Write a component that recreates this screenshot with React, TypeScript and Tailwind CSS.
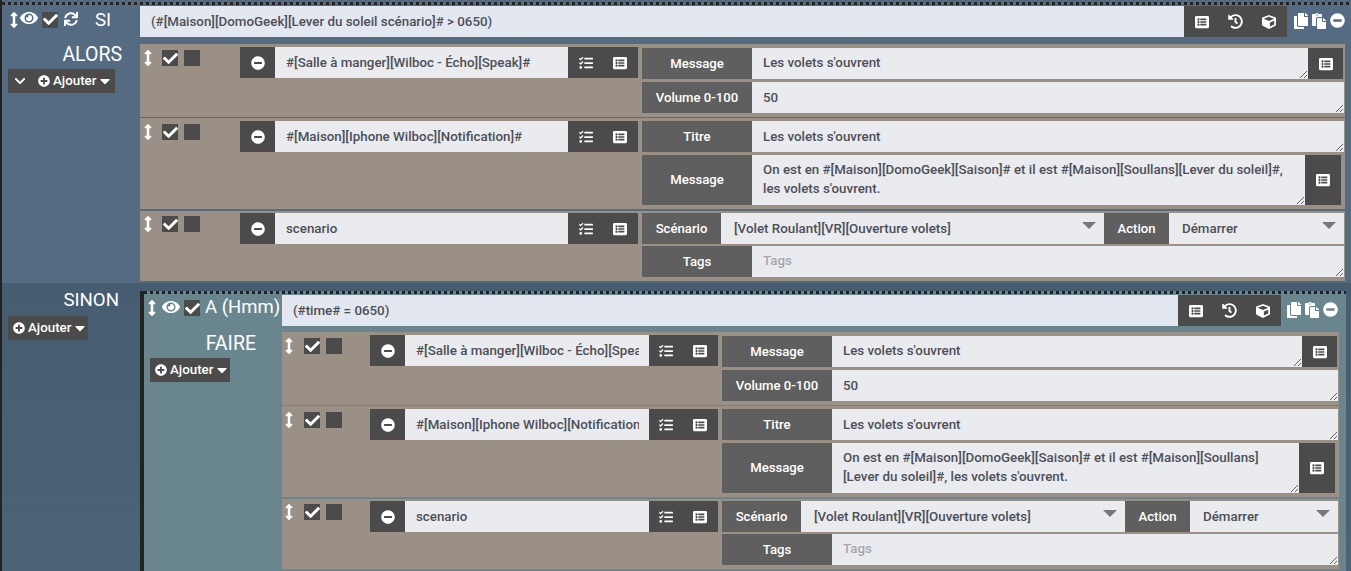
import type { ReactNode } from "react";
import {
  FaArrowsAltV,
  FaCaretDown,
  FaCheck,
  FaChevronDown,
  FaCopy,
  FaCube,
  FaEye,
  FaHistory,
  FaListAlt,
  FaMinusCircle,
  FaPaste,
  FaPlusCircle,
  FaSync,
  FaTasks,
} from "react-icons/fa";

function CheckBox({ checked = true }: { checked?: boolean }) {
  return (
    <span className="flex h-4 w-4 items-center justify-center bg-[#4b4b4b] text-white">
      {checked ? <FaCheck className="h-[15px] w-[15px]" /> : null}
    </span>
  );
}

function Dots() {
  return <div className="h-[3px] bg-[repeating-linear-gradient(90deg,#222_0_3px,transparent_3px_6px)]" />;
}

function AddButton({ chevron = false }: { chevron?: boolean }) {
  return (
    <div className={`flex h-6 w-fit items-center bg-[#4b4b4b] pl-[5px] text-[13.33px] font-medium text-white ${chevron ? "pr-[5px]" : "pr-[3px]"}`}>
      {chevron ? <FaChevronDown className="mr-[12px] ml-[1px] h-[12px] w-[12px]" /> : null}
      <FaPlusCircle className="mr-[3px] h-[12px] w-[12px]" />
      Ajouter
      <FaCaretDown className="ml-[4px] h-[16px] w-[10px]" />
    </div>
  );
}

function Label({ children, className }: { children: ReactNode; className: string }) {
  return (
    <div className={`flex shrink-0 items-center justify-center bg-[#5f5f5f] text-[13.15px] font-medium text-white ${className}`}>
      {children}
    </div>
  );
}

type AreaProps = {
  value?: string;
  placeholder?: string;
  height: string;
  tight?: boolean;
  side?: ReactNode;
};

function Area({ value, placeholder, height, tight, side }: AreaProps) {
  return (
    <div className={`flex min-w-0 flex-1 ${height}`}>
      <textarea
        readOnly
        defaultValue={value}
        placeholder={placeholder}
        className={`h-full min-w-0 flex-1 resize-y bg-[#e9ebef] px-[11px] text-[13.33px] leading-[19px] font-medium text-[#4d4f57] outline-none placeholder:text-[#a5a7ac] ${tight ? "py-[5px]" : "py-[6px]"}`}
      />
      {side}
    </div>
  );
}

function ListButton({ className }: { className: string }) {
  return (
    <div className={`flex shrink-0 items-center justify-center bg-[#4b4b4b] text-white ${className}`}>
      <FaListAlt className="h-[14px] w-[14px]" />
    </div>
  );
}

function Select({ value, className }: { value: string; className: string }) {
  return (
    <div className={`flex items-center bg-[#e9ebef] pl-[13px] text-[13.33px] font-medium text-[#4d4f57] ${className}`}>
      <span className="flex-1 truncate">{value}</span>
      <span className="mr-2 mb-[7px] h-0 w-0 border-x-[7px] border-t-[7px] border-x-transparent border-t-[#777]" />
    </div>
  );
}

type RowProps = {
  name: string;
  children: ReactNode;
  nested: boolean;
  first?: boolean;
  className: string;
};

function ActionRow({ name, children, nested, first, className }: RowProps) {
  return (
    <div className={`flex bg-[#9a9086] ${className}`}>
      <div className={`flex shrink-0 items-start ${first ? "pt-[2px]" : "pt-[3px]"} ${nested ? "w-[88px] pl-[3px]" : "w-[100px] pl-1"}`}>
        <FaArrowsAltV className="h-[16px] w-[8px] text-white" />
        <span className={`mr-[6px] ${nested ? "ml-[11px]" : "ml-[10px]"}`}>
          <CheckBox />
        </span>
        <CheckBox checked={false} />
      </div>
      <div className={`flex h-[31px] shrink-0 ${first ? "-mt-px" : ""} ${nested ? "w-[348px]" : "w-[398px]"}`}>
        <div className="flex w-[35px] shrink-0 items-center justify-center bg-[#4b4b4b] text-white">
          <FaMinusCircle className="h-[14px] w-[14px]" />
        </div>
        <input
          readOnly
          value={name}
          className="min-w-0 flex-1 bg-[#e9ebef] pr-[10px] pl-[11px] text-[13.33px] font-medium text-[#4d4f57] outline-none"
        />
        <div className={`flex shrink-0 items-center justify-between bg-[#4b4b4b] pr-[11px] text-white ${nested ? "w-[69px] pl-[10px]" : "w-[70px] pl-[11px]"}`}>
          <FaTasks className="h-[14px] w-[14px]" />
          <FaListAlt className="h-[14px] w-[14px]" />
        </div>
      </div>
      <div className="ml-1 flex min-w-0 flex-1 flex-col pr-px">{children}</div>
    </div>
  );
}

const MESSAGE = "On est en #[Maison][DomoGeek][Saison]# et il est #[Maison][Soullans][Lever du soleil]#, les volets s'ouvrent.";

function Rows({ nested }: { nested: boolean }) {
  return (
    <div className="flex flex-col">
      <ActionRow name="#[Salle à manger][Wilboc - Écho][Speak]#" nested={nested} first className="h-[73px] pt-1">
        <div className="flex">
          <Label className="h-[31px] w-[110px]">Message</Label>
          <Area value="Les volets s'ouvrent" height="h-[31px]" tight side={<ListButton className="mr-px w-[35px]" />} />
        </div>
        <div className="mt-[3px] flex">
          <Label className="h-[31px] w-[110px]">Volume 0-100</Label>
          <Area value="50" height="h-[31px]" />
        </div>
      </ActionRow>
      <ActionRow name="#[Maison][Iphone Wilboc][Notification]#" nested={nested} className="mt-px h-[91px] pt-[3px]">
        <div className="flex">
          <Label className="h-[31px] w-[110px]">Titre</Label>
          <Area value="Les volets s'ouvrent" height="h-[31px]" />
        </div>
        <div className="mt-[3px] flex">
          <Label className="h-[50px] w-[110px]">Message</Label>
          <Area value={MESSAGE} height="h-[50px]" tight side={<ListButton className="mr-[3px] w-9" />} />
        </div>
      </ActionRow>
      <ActionRow name="scenario" nested={nested} className="mt-[2px] h-[70px] pt-[2px]">
        <div className="flex h-[31px]">
          <Label className="h-[31px] w-[79px]">Scénario</Label>
          <Select value="[Volet Roulant][VR][Ouverture volets]" className="min-w-0 flex-1" />
          <Label className="h-[31px] w-[65px]">Action</Label>
          <Select value="Démarrer" className={nested ? "w-[148px]" : "w-[175px]"} />
        </div>
        <div className="mt-[2px] flex">
          <Label className="h-[31px] w-[110px]">Tags</Label>
          <Area placeholder="Tags" height="h-[31px]" tight />
        </div>
      </ActionRow>
    </div>
  );
}

function HeaderBar({ expression, className }: { expression: string; className: string }) {
  return (
    <>
      <div className="min-w-0 flex-1 bg-[#e3e7ef] pl-[11px] text-[13.33px] leading-[32px] font-medium text-[#4d4f57]">
        {expression}
      </div>
      <div className="flex w-[103px] shrink-0 items-center justify-around bg-[#4b4b4b] px-[1px] text-white">
        <FaListAlt className="h-[14px] w-[14px]" />
        <FaHistory className="h-[15px] w-[15px]" />
        <FaCube className="h-[14px] w-[14px]" />
      </div>
      <div className={`flex shrink-0 items-center gap-1 pb-[2px] text-white ${className}`}>
        <FaCopy className="h-[16px] w-[14px]" />
        <FaPaste className="h-[16px] w-[14px]" />
        <FaMinusCircle className="h-[15px] w-[15px]" />
      </div>
    </>
  );
}

export default function App() {
  return (
    <div className="h-[571px] w-[1351px] overflow-hidden border-l-2 border-[#222] font-['Roboto',sans-serif] text-white">
      {/* SI / ALORS */}
      <section className="h-[283px] bg-[#546b81] pt-[2px]">
        <Dots />
        <div className="mt-px flex h-[31px]">
          <div className="flex w-[138px] shrink-0 items-center pb-[4px] pl-[8px]">
            <FaArrowsAltV className="h-[16px] w-[8px]" />
            <FaEye className="mb-[3px] ml-[2px] h-[18px] w-[18px]" />
            <span className="ml-[4px]">
              <CheckBox />
            </span>
            <FaSync className="mb-[2px] ml-[6px] h-[14px] w-[14px]" />
            <span className="ml-[17px] text-[18.67px]">SI</span>
          </div>
          <HeaderBar expression="(#[Maison][DomoGeek][Lever du soleil scénario]# > 0650)" className="ml-[7px] w-[57px]" />
        </div>
        <div className="mt-[7px] flex">
          <div className="w-[138px] shrink-0 pl-[6px]">
            <div className="pr-[18px] text-right text-[19.5px] leading-[21px]">ALORS</div>
            <div className="mt-[4px]">
              <AddButton chevron />
            </div>
          </div>
          <div className="w-[1205px]">
            <Rows nested={false} />
          </div>
        </div>
      </section>

      {/* SINON */}
      <section className="flex h-[288px] bg-[linear-gradient(180deg,#465c71,#4c6276)]">
        <div className="w-[138px] shrink-0 pt-[7px] pl-[6px]">
          <div className="pr-[21px] text-right text-[18.67px] leading-[21px]">SINON</div>
          <div className="mt-[5px]">
            <AddButton />
          </div>
        </div>
        <div className="mt-[8px] w-[1206px] border-l-4 border-[#222] bg-[#69868f]">
          <Dots />
          <div className="mt-px flex h-[31px]">
            <div className="flex w-[138px] shrink-0 items-center pb-[5px] pl-[4px]">
              <FaArrowsAltV className="h-[16px] w-[8px]" />
              <FaEye className="mb-[3px] ml-[6px] h-[18px] w-[18px]" />
              <span className="ml-[4px]">
                <CheckBox />
              </span>
              <span className="ml-[5px] text-[18.5px] whitespace-nowrap">A (Hmm)</span>
            </div>
            <HeaderBar expression="(#time# = 0650)" className="ml-[6px] w-[59px]" />
          </div>
          <div className="mt-[6px] flex">
            <div className="w-[138px] shrink-0 pt-px pl-[6px]">
              <div className="pr-[26px] text-right text-[19.5px] leading-[21px]">FAIRE</div>
              <div className="mt-[4px]">
                <AddButton />
              </div>
            </div>
            <div className="w-[1057px]">
              <Rows nested />
            </div>
          </div>
        </div>
      </section>
    </div>
  );
}
